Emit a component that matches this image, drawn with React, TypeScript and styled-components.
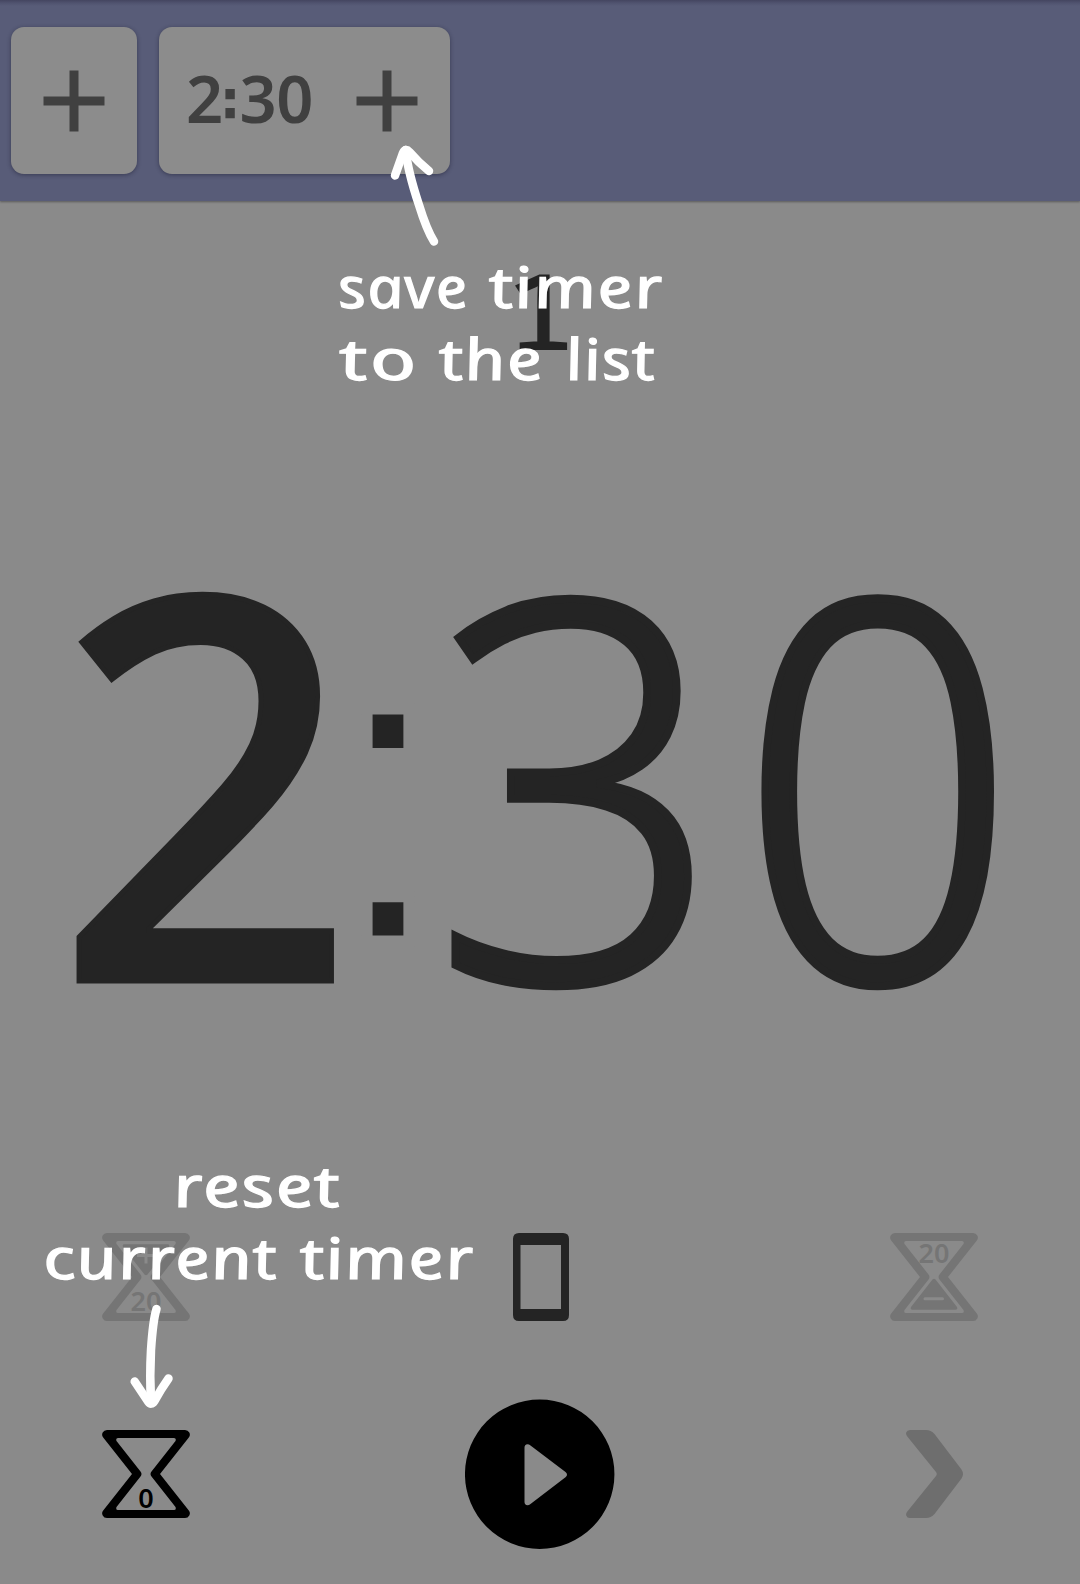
import React from "react";
import styled, { createGlobalStyle } from "styled-components";

const sans = '"Noto Sans", "Open Sans", sans-serif';
const surface = "#8a8a8a";

const GlobalStyle = createGlobalStyle`
  * { box-sizing: border-box; }
  body { margin: 0; background: ${surface}; }
  button { appearance: none; border: 0; padding: 0; margin: 0; background: none; font: inherit; color: inherit; }
  svg { display: block; }
`;

const Screen = styled.div`
  position: relative;
  display: flex;
  flex-direction: column;
  width: 1080px;
  height: 1584px;
  overflow: hidden;
  background: ${surface};
  font-family: ${sans};
`;

const Header = styled.header`
  display: flex;
  flex: none;
  align-items: flex-start;
  gap: 22px;
  height: 201px;
  padding: 27px 11px 0;
  background: linear-gradient(#444560 0, #50536f 3px, #585c78 6px);
  box-shadow: 0 1px 2px rgba(0, 0, 0, 0.35);
`;

const TimerCard = styled.button<{ $width: number }>`
  display: flex;
  align-items: center;
  justify-content: ${(p) => (p.$width > 200 ? "space-between" : "center")};
  width: ${(p) => p.$width}px;
  height: 147px;
  padding: ${(p) => (p.$width > 200 ? "0 32px 0 27px" : "0")};
  border-radius: 13px;
  background: #8c8c8c;
  color: #404040;
  box-shadow: 0 1px 4px rgba(20, 20, 40, 0.45);
`;

const SavedTime = styled.span`
  display: flex;
  align-items: baseline;
  font-size: 65px;
  font-weight: 600;
  letter-spacing: -0.6px;
  line-height: 90px;
  margin-top: -5px;
`;

const SavedColon = styled.span`
  width: 17px;
  font: 700 53px/60px "DejaVu Sans", sans-serif;
  text-indent: -3px;
  transform: translateY(-5px);
`;

const Body = styled.main`
  display: flex;
  flex: 1;
  flex-direction: column;
`;

const Round = styled.div`
  height: 273px;
  padding-top: 49px;
  text-align: center;
  color: #242424;
  font: 500 105px/120px "Noto Sans Mono", monospace;
`;

const RoundDigit = styled.span`
  display: inline-block;
  transform: translateX(1px) scaleX(1.14);
`;

const Clock = styled.div`
  display: flex;
  align-items: baseline;
  height: 600px;
  padding-left: 55px;
  color: #242424;
  line-height: 600px;
`;

const Digit = styled.span<{
  $size: number;
  $weight: number;
  $advance: number;
  $stroke: number;
  $stretch: number;
}>`
  width: ${(p) => p.$advance}px;
  font-size: ${(p) => p.$size}px;
  font-weight: ${(p) => p.$weight};
  -webkit-text-stroke: ${(p) => p.$stroke}px #242424;
  transform: scaleX(${(p) => p.$stretch});
  transform-origin: 0 50%;
`;

const ClockColon = styled.span`
  width: 95.5px;
  font: 400 439px/600px "Liberation Sans", Arial, sans-serif;
  text-indent: -9px;
  transform: translateY(-40px);
  -webkit-text-stroke: 11px ${surface};
`;

const Controls = styled.div`
  display: flex;
  flex: none;
  flex-direction: column;
  gap: 78px;
  margin-top: 159px;
  padding: 0 102px;
`;

const ControlRow = styled.div`
  display: flex;
  align-items: center;
  justify-content: space-between;
`;

const IconButton = styled.button<{ $color: string }>`
  display: flex;
  justify-content: center;
  width: 88px;
  color: ${(p) => p.$color};
`;

const PlayButton = styled(IconButton)`
  width: 150px;
`;

const Hint = styled.div<{ $left: number; $top: number }>`
  position: absolute;
  left: ${(p) => p.$left}px;
  top: ${(p) => p.$top}px;
  display: flex;
  flex-direction: column;
  color: #fff;
  font: italic 400 57px/72px ${sans};
  -webkit-text-stroke: 1.2px #fff;
`;

const HintLine = styled.div<{ $indent?: number }>`
  display: flex;
  padding-left: ${(p) => p.$indent ?? 0}px;
`;

const Word = styled.span<{ $advance: number; $stretch: number; $spacing?: number }>`
  width: ${(p) => p.$advance}px;
  white-space: nowrap;
  letter-spacing: ${(p) => p.$spacing ?? 1}px;
  font-feature-settings: "liga" 0;
  transform: scaleX(${(p) => p.$stretch}) skewX(11deg);
  transform-origin: 0 54px;
`;

const Arrow = styled.svg<{ $left: number; $top: number }>`
  position: absolute;
  left: ${(p) => p.$left}px;
  top: ${(p) => p.$top}px;
  fill: none;
  stroke: #fff;
  stroke-linecap: round;
  stroke-linejoin: round;
`;

const Plus = () => (
  <svg width="62" height="62" viewBox="0 0 62 62" fill="currentColor">
    <path d="M26.500 .5h9v26H61.500v9H35.500v26h-9v-26H.5v-9h26z" />
  </svg>
);

const frame =
  "M5 0H83Q86 0 87.300 2.500Q88.600 5 87 7.200L58 44L87 80.800Q88.600 83 87.300 85.500Q86 88 83 88H5Q2 88 .7 85.500Q-.6 83 1 80.800L30 44L1 7.200Q-.6 5 .7 2.500Q2 0 5 0Z" +
  "M16 8Q13.500 8 14.500 11L38.500 41.500Q40.500 44 38.500 46.500L14.500 77Q13.500 80 16 80H72Q74.500 80 73.500 77L49.500 46.500Q47.500 44 49.500 41.500L73.500 11Q74.500 8 72 8Z";

type HourglassProps = { label: string; mode: "reset" | "add" | "subtract" };

const Hourglass = ({ label, mode }: HourglassProps) => (
  <svg width="88" height="88" viewBox="0 0 88 88" fill="currentColor">
    <path fillRule="evenodd" d={frame} />
    {mode === "subtract" && (
      <path
        fillRule="evenodd"
        d="M42.500 46.500Q44 45 45.500 46.500L67 74Q68 76.700 65.500 76.700H22.500Q20 76.700 21 74ZM35 64.300a1.500 1.500 0 0 0 0 3h17.500a1.500 1.500 0 0 0 0-3z"
      />
    )}
    {mode === "add" && (
      <path
        fillRule="evenodd"
        d="M42.500 41.500Q44 43 45.500 41.500L67 14Q68 11.300 65.500 11.300H22.500Q20 11.300 21 14ZM35 21h7.500v-6.500h3V21H53v3h-7.500v6.500h-3V24H35z"
      />
    )}
    <text
      x="44"
      y={mode === "subtract" ? 30 : mode === "add" ? 78 : 77.5}
      textAnchor="middle"
      fontSize={27}
      fontWeight={600}
      fontFamily="Noto Sans, sans-serif"
    >
      {label}
    </text>
  </svg>
);

const Phone = () => (
  <svg width="58" height="88" viewBox="-2 0 58 88" fill="currentColor">
    <path fillRule="evenodd" d="M6 0H50Q56 0 56 6V82Q56 88 50 88H6Q0 88 0 82V6Q0 0 6 0ZM7.500 12V76H48V12Z" />
  </svg>
);

const Play = () => (
  <svg width="150" height="150" viewBox="0 0 150 150" fill="currentColor">
    <path
      fillRule="evenodd"
      d="M74.700 .5a74.700 74.700 0 1 1 0 149.400a74.700 74.700 0 1 1 0-149.400ZM59.500 48.500V103Q59.500 106 62.500 106.300Q64 106.300 65.500 105L100.500 78.200Q103.500 75.800 100.500 73L65.500 46.500Q64 45.200 62.500 45.200Q59.500 45.500 59.500 48.500Z"
    />
  </svg>
);

const Chevron = () => (
  <svg width="57" height="88" viewBox="0 0 57 88" fill="currentColor">
    <path d="M4 0H20Q25 0 28.500 4L55.500 39.500Q58.500 44 55.500 48.500L28.500 84Q25 88 20 88H4Q1 88 .2 85.500Q-.3 83.500 1.300 81.500L30 46Q31.500 44 30 42L1.300 6.500Q-.3 4.500 .2 2.500Q1 0 4 0Z" />
  </svg>
);

export default function App() {
  return (
    <Screen>
      <GlobalStyle />
      <Header>
        <TimerCard $width={126} aria-label="New timer">
          <Plus />
        </TimerCard>
        <TimerCard $width={291} aria-label="Save 2:30">
          <SavedTime>
            2<SavedColon>:</SavedColon>30
          </SavedTime>
          <Plus />
        </TimerCard>
      </Header>
      <Body>
        <Round>
          <RoundDigit>1</RoundDigit>
        </Round>
        <Clock>
          <Digit $size={534} $weight={500} $advance={281} $stroke={5} $stretch={0.985}>2</Digit>
          <ClockColon>:</ClockColon>
          <Digit $size={528} $weight={300} $advance={306.5} $stroke={8} $stretch={0.963}>3</Digit>
          <Digit $size={528} $weight={300} $advance={290} $stroke={8} $stretch={0.928}>0</Digit>
        </Clock>
        <Controls>
          <ControlRow>
            <IconButton $color="#757575" aria-label="Add 20 seconds">
              <Hourglass label="20" mode="add" />
            </IconButton>
            <IconButton $color="#242424" aria-label="Orientation">
              <Phone />
            </IconButton>
            <IconButton $color="#757575" aria-label="Remove 20 seconds">
              <Hourglass label="20" mode="subtract" />
            </IconButton>
          </ControlRow>
          <ControlRow>
            <IconButton $color="#000" aria-label="Reset">
              <Hourglass label="0" mode="reset" />
            </IconButton>
            <PlayButton $color="#000" aria-label="Start">
              <Play />
            </PlayButton>
            <IconButton $color="#6e6e6e" aria-label="Next">
              <Chevron />
            </IconButton>
          </ControlRow>
        </Controls>
      </Body>

      <Arrow $left={380} $top={135} width="64" height="120" viewBox="380 135 64 120" strokeWidth="8.500">
        <path d="M434 241.500C428 232 423 218 419 205C412 184 407 164 405.700 150" />
        <path d="M395 175.500L403 153Q405.500 147.500 409.500 152Q418 162 429 171" />
      </Arrow>
      <Hint $left={341} $top={250}>
        <HintLine>
          <Word $advance={151} $stretch={1.12}>save</Word>
          <Word $advance={180} $stretch={1.25}>timer</Word>
        </HintLine>
        <HintLine $indent={2}>
          <Word $advance={99} $stretch={1.44} $spacing={2}>to</Word>
          <Word $advance={126} $stretch={1.25}>the</Word>
          <Word $advance={100} $stretch={1.17}>list</Word>
        </HintLine>
      </Hint>

      <Hint $left={46} $top={1149}>
        <HintLine $indent={130}>
          <Word $advance={170} $stretch={1.32}>reset</Word>
        </HintLine>
        <HintLine>
          <Word $advance={257} $stretch={1.23}>current</Word>
          <Word $advance={180} $stretch={1.25}>timer</Word>
        </HintLine>
      </Hint>
      <Arrow $left={120} $top={1295} width="64" height="125" viewBox="120 1295 64 125" strokeWidth="8.500">
        <path d="M156.500 1309C153 1320 152 1335 151 1350C150 1368 150 1385 151 1402" />
        <path d="M134.700 1381.500L148 1401.500Q151.300 1406 154.500 1401Q161 1389 168.500 1378.500" />
      </Arrow>
    </Screen>
  );
}
